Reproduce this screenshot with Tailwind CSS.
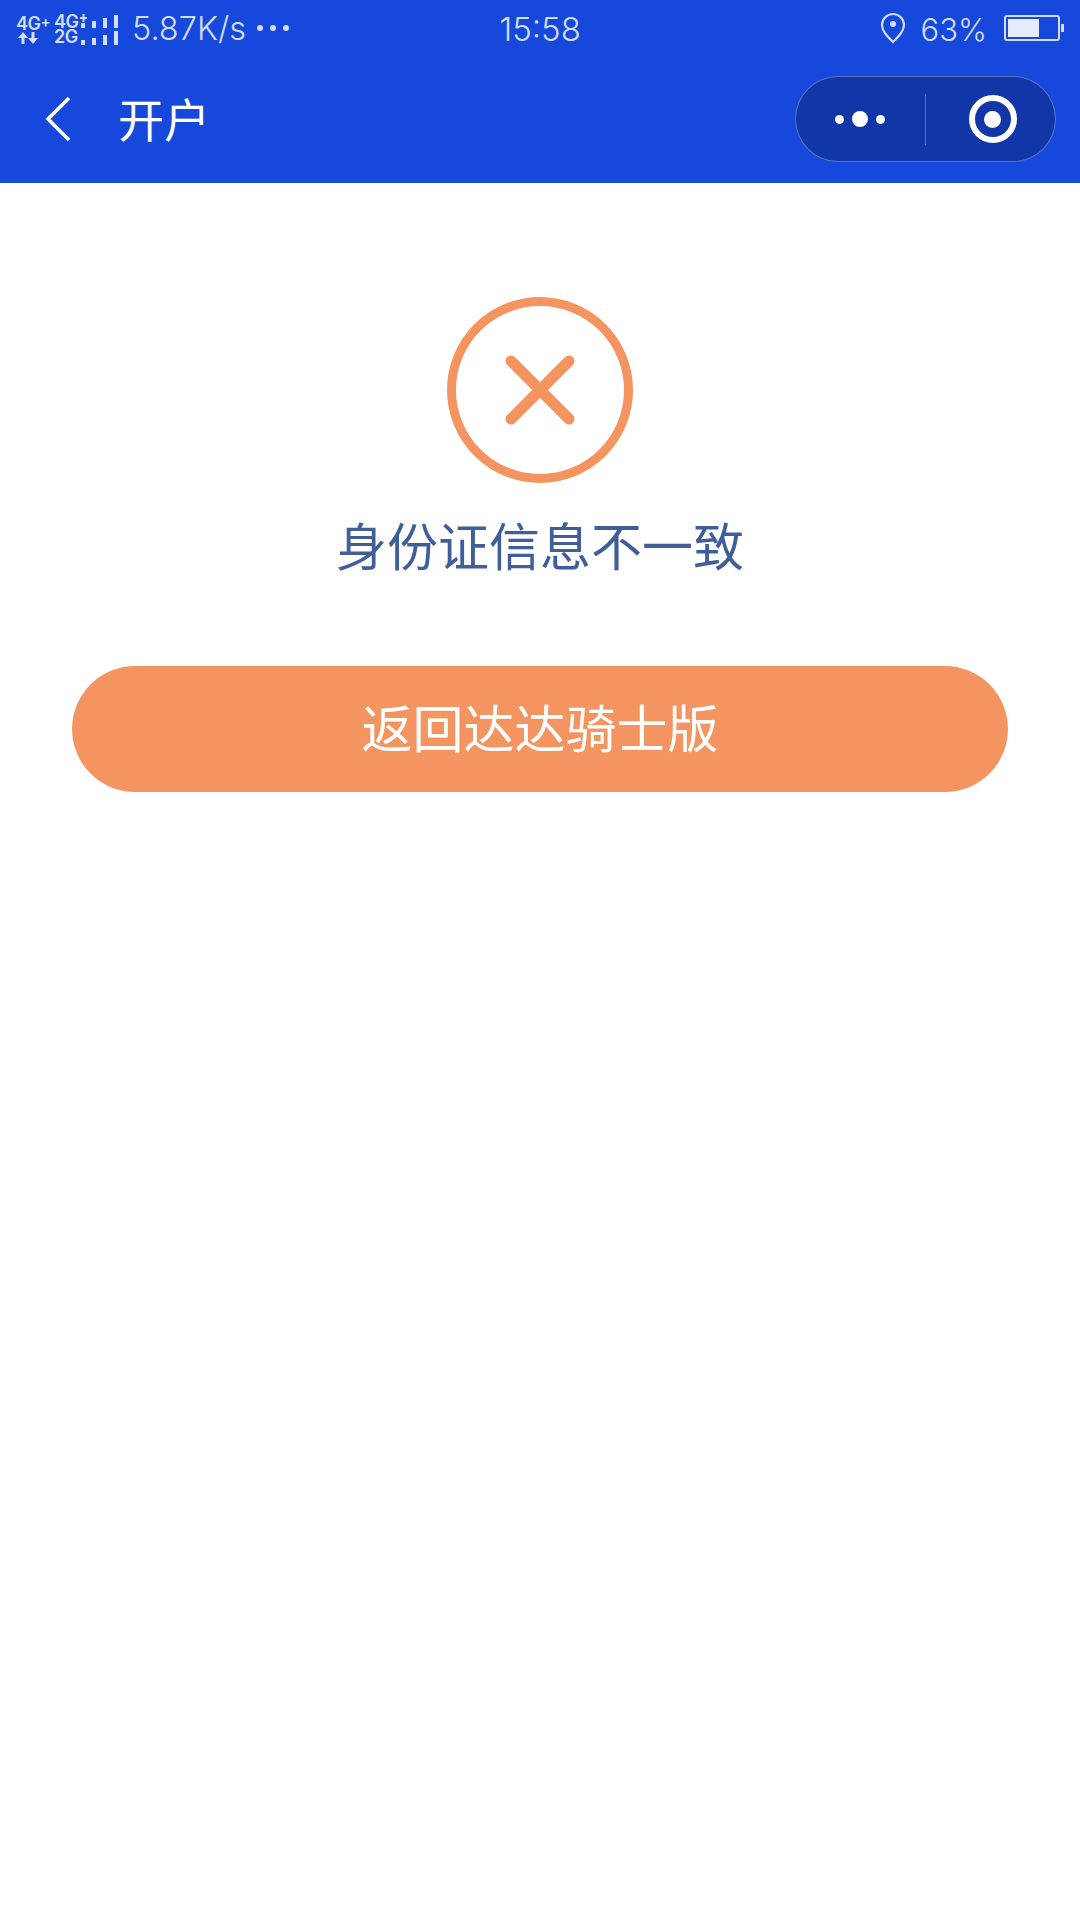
<!DOCTYPE html>
<html lang="zh-CN">
<head>
  <meta charset="UTF-8">
  <meta name="viewport" content="width=device-width, initial-scale=1.0">
  <title>开户</title>
  <script src="https://cdn.jsdelivr.net/npm/@tailwindcss/browser@4"></script>
</head>
<body class="w-[1080px] h-[1920px] bg-white font-['Noto_Sans_CJK_SC',sans-serif] overflow-hidden">

  <!-- Blue header -->
  <header class="h-[183px] bg-[#1648DB] flex flex-col">
    <!-- Status bar -->
    <div class="h-[55px] pl-[16px] pr-[16px] grid grid-cols-3 items-center text-[#D3DCF8] font-['Inter',sans-serif]">
      <div class="flex items-center">
        <div class="flex flex-col items-start w-[38px] mt-[4px]">
          <div class="flex items-start h-[15px]">
            <span class="text-[18px] leading-[15px] font-semibold tracking-[-0.5px]">4G</span>
            <span class="text-[15px] leading-[11px] font-semibold">+</span>
          </div>
          <svg width="20" height="12" viewBox="0 0 20 12" class="mt-[1px] ml-[2px]" fill="currentColor">
            <path d="M5 0l5 6H6.500v6h-3V6H0zM15 12l-5-6h3.500V0h3v6H20z"/>
          </svg>
        </div>
        <div class="flex flex-col items-start w-[26px] mt-[3px]">
          <span class="text-[18px] leading-[15px] font-semibold tracking-[-0.5px]">4G</span>
          <span class="text-[18px] leading-[15px] font-semibold tracking-[-0.5px]">2G</span>
        </div>
        <svg width="38" height="32" viewBox="0 0 38 32" fill="currentColor" class="mt-[2px]">
          <path d="M2.500 1h2v3h2.500v2H4.500v3h-2V6H0V4h2.500zM1 10h4v5H1zM12 8h4v7h-4zM23 5h4v10h-4zM34 2h4v13h-4zM1 27h4v5H1zM12 25h4v7h-4zM23 22h4v10h-4zM34 18h4v14h-4z"/>
        </svg>
        <span class="ml-[14px] mt-[4px] text-[32.500px] leading-none font-light whitespace-nowrap">5.87K/s</span>
        <div class="ml-[11px] flex gap-[7px]">
          <span class="size-[6px] rounded-full bg-[#D3DCF8]"></span>
          <span class="size-[6px] rounded-full bg-[#D3DCF8]"></span>
          <span class="size-[6px] rounded-full bg-[#D3DCF8]"></span>
        </div>
      </div>
      <div class="mt-[4px] text-center text-[33px] leading-none font-light">15:58</div>
      <div class="flex items-center justify-end">
        <svg width="26" height="32" viewBox="0 0 26 32" fill="none" stroke="currentColor" stroke-width="2.2">
          <path d="M13 30C7 24 2 19 2 13a11 11 0 0 1 22 0c0 6-5 11-11 17z"/>
          <circle cx="13" cy="12" r="3" fill="currentColor" stroke="none"/>
        </svg>
        <span class="ml-[15px] mt-[4px] text-[31px] leading-none font-light">63%</span>
        <div class="ml-[17px] flex items-center">
          <div class="w-[56px] h-[26px] rounded-[3px] border-2 border-[#D3DCF8] p-[2px] flex">
            <div class="w-[31px] bg-[#E6EBFB]"></div>
          </div>
          <div class="w-[3px] h-[8px] ml-[1px] bg-[#D3DCF8]"></div>
        </div>
      </div>
    </div>

    <!-- Nav bar -->
    <div class="flex-1 flex items-center pl-[44px] pr-[24px]">
      <svg width="28" height="46" viewBox="0 0 28 46" fill="none" stroke="white" stroke-width="3.6">
        <path d="M25 2L4 23l21 21"/>
      </svg>
      <span class="ml-[46px] mb-[4px] text-[46px] leading-none text-white">开户</span>
      <div class="ml-auto w-[261px] h-[86px] rounded-full bg-[#1136A8] border border-white/30 flex items-center">
        <div class="w-[129px] flex items-center justify-center gap-[8px] pr-[2px]">
          <span class="size-[9px] rounded-full bg-white"></span>
          <span class="size-[16px] rounded-full bg-white"></span>
          <span class="size-[9px] rounded-full bg-white"></span>
        </div>
        <div class="w-px h-[51px] bg-white/30"></div>
        <div class="flex-1 flex items-center justify-center pl-[4px]">
          <div class="size-[48px] rounded-full border-[6px] border-white flex items-center justify-center">
            <span class="size-[17px] rounded-full bg-white"></span>
          </div>
        </div>
      </div>
    </div>
  </header>

  <!-- Result -->
  <main class="flex flex-col items-center pt-[114px]">
    <svg width="186" height="186" viewBox="0 0 186 186" fill="none" stroke="#F49561">
      <circle cx="93" cy="93" r="88.500" stroke-width="9"/>
      <path d="M64 64l58 58M122 64l-58 58" stroke-width="11" stroke-linecap="round"/>
    </svg>
    <p class="mt-[25px] text-[51px] leading-[72px] text-[#3F5E9A]">身份证信息不一致</p>
    <button class="mt-[86px] w-[936px] h-[126px] pb-[6px] rounded-[63px] bg-[#F49561] text-white text-[51px]">返回达达骑士版</button>
  </main>
</body>
</html>
